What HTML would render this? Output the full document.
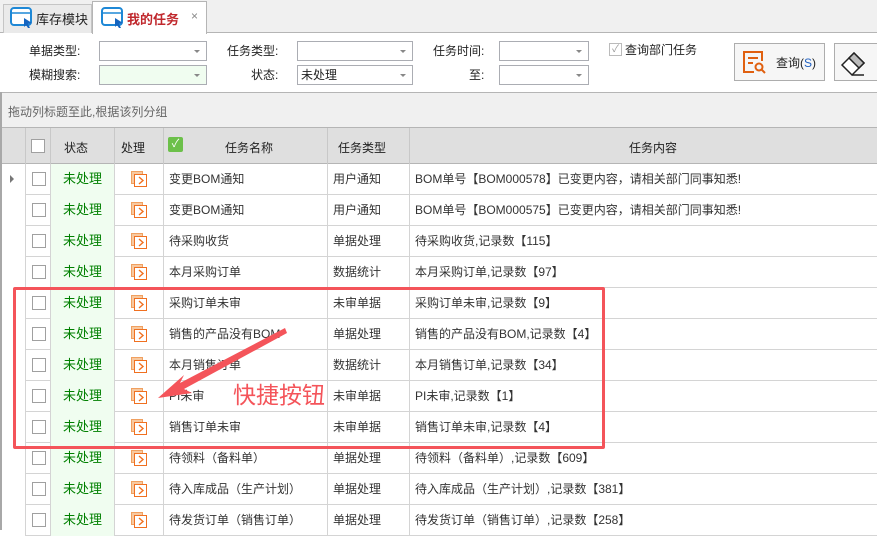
<!DOCTYPE html>
<html><head><meta charset="utf-8"><style>
*{margin:0;padding:0;box-sizing:border-box}
body{width:877px;height:530px;overflow:hidden;background:#fff;font-family:"Liberation Sans","Noto Sans CJK SC",sans-serif;font-size:12px;color:#222;position:relative}
.a{position:absolute}
.sel{position:absolute;height:20px;border:1px solid #abadb3;background:#fff;font-size:12px;line-height:18px;padding-left:3px}
.sel:after{content:"";position:absolute;right:6px;top:8px;border-left:3px solid transparent;border-right:3px solid transparent;border-top:3px solid #888}
.lbl{position:absolute;font-size:12px;line-height:20px}
.row{position:absolute;left:25px;width:852px;height:31px;border-bottom:1px solid #d4d4d4}
.c{position:absolute;top:0;height:31px;line-height:30px;border-right:1px solid #d4d4d4;white-space:nowrap;overflow:hidden;font-size:12px}
.cb{position:absolute;width:14px;height:14px;border:1px solid #a0a0a0;background:#fff}
</style></head><body>
<div class="a" style="left:0;top:0;width:877px;height:33px;background:#f0f0f0;border-bottom:1px solid #b5b5b5"></div>
<div class="a" style="left:3px;top:4px;width:89px;height:29px;background:#eaeaea;border:1px solid #c5c5c5;border-bottom:none"></div>
<svg class="a" style="left:10px;top:7px" width="24" height="22" viewBox="0 0 24 22"><rect x="1" y="1" width="20" height="17" rx="3" fill="#fff" stroke="#1e88d6" stroke-width="2"/><line x1="1" y1="6" x2="21" y2="6" stroke="#1e88d6" stroke-width="1.5"/><path d="M14 11 L22 16 L18 17 L20 21 L18 21 L16 18 L14 20Z" fill="#1565c0"/></svg>
<div class="a" style="left:36px;top:9px;font-size:13px">库存模块</div>
<div class="a" style="left:92px;top:1px;width:115px;height:33px;background:#fff;border:1px solid #b5b5b5;border-bottom:none"></div>
<svg class="a" style="left:101px;top:7px" width="24" height="22" viewBox="0 0 24 22"><rect x="1" y="1" width="20" height="17" rx="3" fill="#fff" stroke="#1e88d6" stroke-width="2"/><line x1="1" y1="6" x2="21" y2="6" stroke="#1e88d6" stroke-width="1.5"/><path d="M14 11 L22 16 L18 17 L20 21 L18 21 L16 18 L14 20Z" fill="#1565c0"/></svg>
<div class="a" style="left:127px;top:9px;font-size:13px;font-weight:bold;color:#c0282d">我的任务</div>
<div class="a" style="left:191px;top:9px;font-size:12px;color:#888">×</div>
<div class="lbl" style="left:29px;top:41px">单据类型:</div>
<div class="sel" style="left:99px;top:41px;width:108px"></div>
<div class="lbl" style="left:29px;top:65px">模糊搜索:</div>
<div class="sel" style="left:99px;top:65px;width:108px;background:#f0fdf0"></div>
<div class="lbl" style="left:227px;top:41px">任务类型:</div>
<div class="sel" style="left:297px;top:41px;width:116px"></div>
<div class="lbl" style="left:251px;top:65px">状态:</div>
<div class="sel" style="left:297px;top:65px;width:116px">未处理</div>
<div class="lbl" style="left:433px;top:41px">任务时间:</div>
<div class="sel" style="left:499px;top:41px;width:90px"></div>
<div class="lbl" style="left:469px;top:65px">至:</div>
<div class="sel" style="left:499px;top:65px;width:90px"></div>
<div class="a" style="left:609px;top:43px;width:13px;height:13px;border:1px solid #bbb;color:#999;font-size:10px;line-height:11px;text-align:center">✓</div>
<div class="lbl" style="left:625px;top:40px">查询部门任务</div>
<div class="a" style="left:734px;top:43px;width:91px;height:38px;border:1px solid #adadad;background:#f6f6f6"></div>
<svg class="a" style="left:741px;top:49px" width="26" height="26" viewBox="0 0 26 26"><path d="M21 12 V3 H3 V23 H13" fill="none" stroke="#e06010" stroke-width="2"/><line x1="7" y1="9" x2="17" y2="9" stroke="#e06010" stroke-width="2"/><line x1="7" y1="14" x2="12" y2="14" stroke="#e06010" stroke-width="2"/><circle cx="18" cy="18" r="3.5" fill="none" stroke="#e06010" stroke-width="2"/><line x1="20.5" y1="20.5" x2="24" y2="24" stroke="#e06010" stroke-width="2"/></svg>
<div class="a" style="left:776px;top:54px;font-size:12px">查询(<span style="color:#2060c0">S</span>)</div>
<div class="a" style="left:834px;top:43px;width:50px;height:38px;border:1px solid #adadad;background:#f6f6f6"></div>
<svg class="a" style="left:838px;top:47px" width="30" height="30" viewBox="0 0 30 30"><path d="M4 18 L16 6 L26 16 L14 28Z" fill="#fff" stroke="#222" stroke-width="1.5"/><path d="M11 11 L16 6 L26 16 L21 21Z" fill="#bbb" stroke="#222" stroke-width="1.5"/><line x1="14" y1="28" x2="26" y2="28" stroke="#222" stroke-width="1.5"/></svg>
<div class="a" style="left:2px;top:92px;width:875px;height:36px;background:#f0f0f0;border-top:1px solid #b5b5b5;border-bottom:1px solid #b5b5b5"></div>
<div class="a" style="left:8px;top:103px;color:#666;font-size:12px">拖动列标题至此,根据该列分组</div>
<div class="a" style="left:0;top:92px;width:2px;height:438px;background:#a8a8a8"></div>
<div class="a" style="left:2px;top:128px;width:875px;height:36px;background:#dfdfdf;border-bottom:1px solid #b5b5b5"></div>
<div class="a" style="left:25px;top:128px;width:1px;height:36px;background:#c8c8c8"></div>
<div class="cb" style="left:31px;top:139px"></div>
<div class="a" style="left:50px;top:128px;width:1px;height:36px;background:#c8c8c8"></div>
<div class="a" style="left:64px;top:139px">状态</div>
<div class="a" style="left:114px;top:128px;width:1px;height:36px;background:#c8c8c8"></div>
<div class="a" style="left:121px;top:139px">处理</div>
<div class="a" style="left:163px;top:128px;width:1px;height:36px;background:#c8c8c8"></div>
<div class="a" style="left:168px;top:137px;width:15px;height:15px;background:#6cc04a;border-radius:2px;color:#fff;font-size:11px;line-height:15px;text-align:center">✓</div>
<div class="a" style="left:225px;top:139px">任务名称</div>
<div class="a" style="left:327px;top:128px;width:1px;height:36px;background:#c8c8c8"></div>
<div class="a" style="left:338px;top:139px">任务类型</div>
<div class="a" style="left:409px;top:128px;width:1px;height:36px;background:#c8c8c8"></div>
<div class="a" style="left:629px;top:139px">任务内容</div>
<div id="rows"></div>
<div class="a" style="left:10px;top:175px;border-top:4px solid transparent;border-bottom:4px solid transparent;border-left:4px solid #777"></div>
<script>
var d=[["变更BOM通知","用户通知","BOM单号【BOM000578】已变更内容，请相关部门同事知悉!"],["变更BOM通知","用户通知","BOM单号【BOM000575】已变更内容，请相关部门同事知悉!"],["待采购收货","单据处理","待采购收货,记录数【115】"],["本月采购订单","数据统计","本月采购订单,记录数【97】"],["采购订单未审","未审单据","采购订单未审,记录数【9】"],["销售的产品没有BOM","单据处理","销售的产品没有BOM,记录数【4】"],["本月销售订单","数据统计","本月销售订单,记录数【34】"],["PI未审","未审单据","PI未审,记录数【1】"],["销售订单未审","未审单据","销售订单未审,记录数【4】"],["待领料（备料单）","单据处理","待领料（备料单）,记录数【609】"],["待入库成品（生产计划）","单据处理","待入库成品（生产计划）,记录数【381】"],["待发货订单（销售订单）","单据处理","待发货订单（销售订单）,记录数【258】"]];
var h="";
var ic='<svg width="16" height="16" viewBox="0 0 16 16"><rect x="0.5" y="0.5" width="11" height="12" fill="#f7c9a0" stroke="#f0a060"/><rect x="3.5" y="3.5" width="12" height="12" fill="#fff" stroke="#f07020"/><path d="M8 6 L12 9.5 L8 13" fill="none" stroke="#f07020" stroke-width="1.4"/></svg>';
for(var i=0;i<d.length;i++){var t=164+i*31;
h+='<div class="row" style="top:'+t+'px;border-left:1px solid #d4d4d4">'+
'<div class="c" style="left:0;width:25px"><div class="cb" style="left:6px;top:8px"></div></div>'+
'<div class="c" style="left:25px;width:64px;background:#f0fdf0;color:#008000;text-align:center;font-size:13px">未处理</div>'+
'<div class="c" style="left:89px;width:49px;text-align:center;padding-top:7px;line-height:16px">'+ic+'</div>'+
'<div class="c" style="left:138px;width:164px;padding-left:5px;color:#333">'+d[i][0]+'</div>'+
'<div class="c" style="left:302px;width:82px;padding-left:5px;color:#333">'+d[i][1]+'</div>'+
'<div class="c" style="left:384px;width:468px;padding-left:5px;border-right:none;color:#333">'+d[i][2]+'</div></div>';}
document.getElementById("rows").innerHTML=h;
</script>
<div class="a" style="left:13px;top:287px;width:592px;height:162px;border:3px solid #f4545a;border-radius:2px"></div>
<svg class="a" style="left:0;top:0" width="877" height="530"><path d="M285 328 L180 383 L184 375 L158 398 L192 393 L184 389 L287 333Z" fill="#f4545a"/></svg>
<div class="a" style="left:233px;top:376px;font-size:23px;color:#f4545a">快捷按钮</div>
</body></html>
